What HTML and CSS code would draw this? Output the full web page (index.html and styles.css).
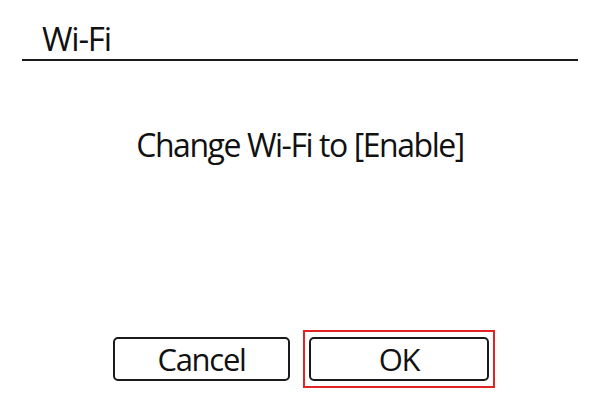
FILE: index.html
```html
<!DOCTYPE html>
<html>
<head>
<meta charset="utf-8">
<link rel="stylesheet" href="styles.css">
</head>
<body>
<div class="screen">
  <div class="header"><span class="title">Wi-Fi</span></div>
  <div class="message">Change Wi-Fi to [Enable]</div>
  <div class="buttons">
    <div class="btn cancel">Cancel</div>
    <div class="focus"><div class="btn ok">OK</div></div>
  </div>
</div>
</body>
</html>
```
FILE: styles.css
```css
html, body {
  margin: 0;
  padding: 0;
  background: #ffffff;
}
.screen {
  width: 600px;
  height: 400px;
  display: flex;
  flex-direction: column;
  font-family: "Open Sans", "Noto Sans", sans-serif;
  color: #111111;
}
.header {
  margin: 0 22px;
  height: 59px;
  border-bottom: 2px solid #1a1a1a;
  padding-left: 20px;
  box-sizing: content-box;
  display: flex;
  align-items: flex-end;
}
.title {
  font-size: 33px;
  line-height: 40px;
  letter-spacing: -1.2px;
}
.message {
  margin-top: 64px;
  text-align: center;
  font-size: 32px;
  line-height: 40px;
  letter-spacing: -1.45px;
}
.buttons {
  margin-top: auto;
  margin-bottom: 12px;
  display: flex;
  align-items: center;
  padding-left: 113px;
  gap: 13px;
}
.btn {
  box-sizing: border-box;
  height: 44px;
  border: 2px solid #1a1a1a;
  border-radius: 5px;
  display: flex;
  align-items: center;
  justify-content: center;
  font-size: 31px;
  letter-spacing: -1.3px;
}
.cancel {
  width: 177px;
}
.ok {
  width: 180px;
}
.focus {
  border: 2px solid #e32222;
  padding: 5px 4px;
}
```
